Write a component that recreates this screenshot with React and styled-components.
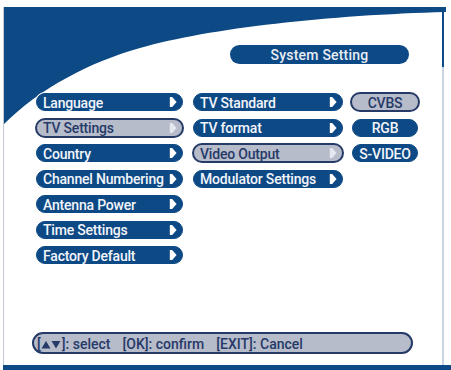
import React from 'react';
import styled, { createGlobalStyle, css } from 'styled-components';

const BLUE = '#0c4985';
const NAVY = '#263a68';
const GREY = '#b7bccb';

const GlobalStyle = createGlobalStyle`
  html, body {
    margin: 0;
    padding: 0;
    background: #ffffff;
  }
  * {
    box-sizing: border-box;
  }
`;

const Screen = styled.div`
  position: relative;
  width: 451px;
  height: 370px;
  overflow: hidden;
  background: #ffffff;
  font-family: Roboto, 'Liberation Sans', Arial, sans-serif;
  font-weight: 500;
  font-size: 14px;
`;

const Backdrop = styled.svg`
  position: absolute;
  inset: 0;
  z-index: 0;
`;

const Content = styled.div`
  position: relative;
  z-index: 1;
  display: flex;
  flex-direction: column;
  height: 100%;
  padding: 45px 0 0 0;
`;

const TitleRow = styled.div`
  display: flex;
  padding-left: 230px;
`;

const Title = styled.div`
  width: 179px;
  height: 19px;
  border-radius: 10px;
  background: ${BLUE};
  color: #e9edf5;
  display: flex;
  align-items: center;
  justify-content: center;
  letter-spacing: 0.2px;
`;

const Menus = styled.div`
  display: flex;
  align-items: flex-start;
  margin-top: 29px;
  padding-left: 36px;
`;

const Column = styled.div`
  display: flex;
  flex-direction: column;
  gap: 7.5px;
  width: ${(p) => p.$width}px;
  margin-right: ${(p) => p.$gap || 0}px;
`;

const Pill = styled.div`
  position: relative;
  height: 18px;
  border-radius: 9px;
  display: flex;
  align-items: center;
  justify-content: ${(p) => (p.$center ? 'center' : 'flex-start')};
  padding: ${(p) => (p.$center ? '1px 0 0' : '1px 0 0 6px')};
  background: ${BLUE};
  color: #f3f5fa;
  border: 1px solid ${BLUE};
  box-shadow: 0 0 0 1px #ffffff;
  white-space: nowrap;
  letter-spacing: -0.2px;

  ${(p) =>
    p.$active &&
    css`
      height: 20px;
      margin: -1px ${p.$center ? '-2px' : '-1px'};
      border-radius: 10px;
      background: ${GREY};
      color: ${NAVY};
      border: 2px solid ${NAVY};
      padding: ${p.$center ? '1px 0 0' : '1px 0 0 6px'};
    `}
`;

const Arrow = styled.svg`
  position: absolute;
  right: 5px;
  top: 50%;
  width: 8px;
  height: 11px;
  transform: translateY(-50%);
`;

const Spacer = styled.div`
  flex: 1;
`;

const Footer = styled.div`
  margin: 0 0 16px 32px;
  width: 381px;
  height: 22px;
  border-radius: 11px;
  background: ${GREY};
  border: 2px solid ${NAVY};
  box-shadow: 0 0 0 1px #ffffff;
  color: ${NAVY};
  display: flex;
  align-items: center;
  padding: 1px 0 0 3px;
`;

const Hint = styled.span`
  margin-right: 12px;
`;

const Keys = styled.svg`
  width: 20px;
  height: 9px;
  margin: 0 0.5px;
  vertical-align: 0;
`;

const ArrowIcon = ({ light }) => (
  <Arrow viewBox="0 0 8 11">
    <path d="M0.8 0.6 H3.2 L7.6 5.5 L3.2 10.4 H0.8 Z" fill={light ? '#e4e8f0' : '#ffffff'} />
  </Arrow>
);

const UpDown = () => (
  <Keys viewBox="0 0 20 9">
    <path d="M0.5 8.5 L5 1 L9.5 8.5 Z" fill={NAVY} />
    <path d="M10.5 1 L19.5 1 L15 8.5 Z" fill={NAVY} />
  </Keys>
);

const mainMenu = [
  'Language',
  'TV Settings',
  'Country',
  'Channel Numbering',
  'Antenna Power',
  'Time Settings',
  'Factory Default',
];

const tvMenu = ['TV Standard', 'TV format', 'Video Output', 'Modulator Settings'];

const outputs = ['CVBS', 'RGB', 'S-VIDEO'];

export default function App() {
  return (
    <>
      <GlobalStyle />
      <Screen>
        <Backdrop width="451" height="370" viewBox="0 0 451 370">
          <path
            d="M3 7 H446 V12 C330 15 210 28 140 48 C90 62 40 88 3 125 Z"
            fill={BLUE}
          />
          <rect x="442" y="7" width="2" height="358" fill="#c9d3e1" />
          <rect x="442" y="7" width="2" height="60" fill={BLUE} />
          <rect x="3" y="7" width="1" height="358" fill="#c3c9d3" />
          <rect x="3" y="365" width="448" height="5" fill={BLUE} />
        </Backdrop>
        <Content>
          <TitleRow>
            <Title>System Setting</Title>
          </TitleRow>
          <Menus>
            <Column $width={147} $gap={10}>
              {mainMenu.map((item) => (
                <Pill key={item} $active={item === 'TV Settings'}>
                  {item}
                  <ArrowIcon light={item === 'TV Settings'} />
                </Pill>
              ))}
            </Column>
            <Column $width={150} $gap={9}>
              {tvMenu.map((item) => (
                <Pill key={item} $active={item === 'Video Output'}>
                  {item}
                  <ArrowIcon light={item === 'Video Output'} />
                </Pill>
              ))}
            </Column>
            <Column $width={66}>
              {outputs.map((item) => (
                <Pill key={item} $center $active={item === 'CVBS'}>
                  {item}
                </Pill>
              ))}
            </Column>
          </Menus>
          <Spacer />
          <Footer>
            <Hint>[<UpDown />]: select</Hint>
            <Hint>[OK]: confirm</Hint>
            <span>[EXIT]: Cancel</span>
          </Footer>
        </Content>
      </Screen>
    </>
  );
}
